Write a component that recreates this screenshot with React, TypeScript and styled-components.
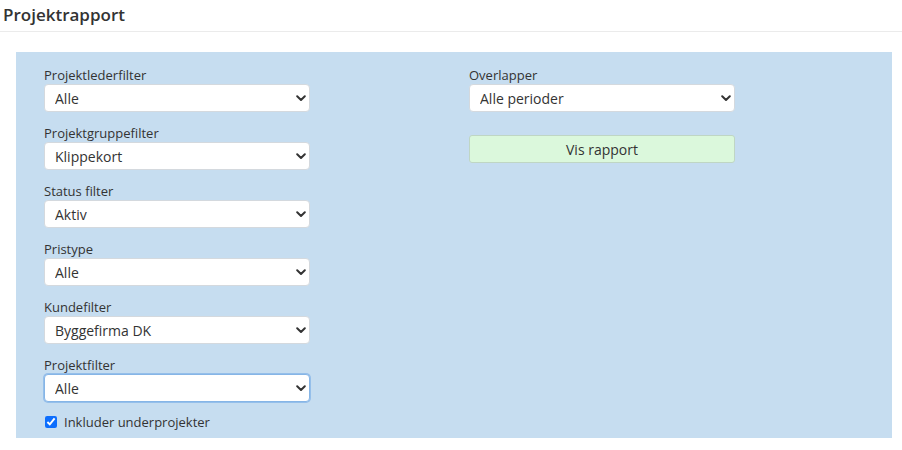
import React from "react";
import styled, { createGlobalStyle } from "styled-components";

const Global = createGlobalStyle`
  html, body { margin: 0; padding: 0; background: #fff; }
  body { font-family: "Open Sans", "Noto Sans", Arial, sans-serif; color: #333; }
`;

const Page = styled.div`
  width: 902px;
  height: 450px;
  overflow: hidden;
`;

const Header = styled.div`
  padding: 4px 0 0 3px;
  height: 27px;
  border-bottom: 1px solid #ebebeb;
`;

const Title = styled.h1`
  margin: 0;
  font-size: 17px;
  line-height: 22px;
  font-weight: 600;
  color: #333;
`;

const Panel = styled.div`
  margin: 20px 0 0 16px;
  width: 876px;
  height: 386px;
  box-sizing: border-box;
  background: #c6ddf0;
  padding: 14px 28px 0 28px;
  display: grid;
  grid-template-columns: 425px 1fr;
`;

const Column = styled.div`
  display: flex;
  flex-direction: column;
  gap: 12px;
`;

const Field = styled.div`
  display: flex;
  flex-direction: column;
`;

const Label = styled.label`
  font-size: 13px;
  line-height: 18px;
  color: #333;
`;

const SelectWrap = styled.div`
  position: relative;
  width: 266px;
  height: 28px;
`;

const Select = styled.select<{ $focused?: boolean }>`
  appearance: none;
  -webkit-appearance: none;
  width: 266px;
  height: 28px;
  box-sizing: border-box;
  margin: 0;
  padding: 0 28px 0 10px;
  font-family: "Open Sans", "Noto Sans", Arial, sans-serif;
  font-size: 14px;
  color: #333;
  background: #fff;
  border: 1px solid ${(p) => (p.$focused ? "#86b5e6" : "#d4d9de")};
  border-radius: 4px;
  box-shadow: ${(p) => (p.$focused ? "0 0 0 1px rgba(110,165,230,0.55)" : "none")};
  outline: none;
`;

const Chevron = styled.svg`
  position: absolute;
  right: 4px;
  top: 11px;
  width: 10px;
  height: 7px;
  pointer-events: none;
`;

const CheckRow = styled.label`
  display: flex;
  align-items: center;
  gap: 7px;
  font-size: 13px;
  line-height: 20px;
  color: #333;
  margin-top: -2px;
`;

const Check = styled.input`
  width: 12px;
  height: 12px;
  margin: 0 0 0 1px;
  accent-color: #0d6efd;
`;

const Button = styled.button`
  width: 266px;
  height: 28px;
  margin-top: 11px;
  box-sizing: border-box;
  background: #dbf8dc;
  border: 1px solid #bfd6c4;
  border-radius: 3px;
  font-family: "Open Sans", "Noto Sans", Arial, sans-serif;
  font-size: 14px;
  color: #333;
  padding: 0;
`;

function Dropdown({ label, value, focused }: { label: string; value: string; focused?: boolean }) {
  return (
    <Field>
      <Label>{label}</Label>
      <SelectWrap>
        <Select $focused={focused} defaultValue={value}>
          <option>{value}</option>
        </Select>
        <Chevron viewBox="0 0 10 7">
          <path d="M1.2 1.3 L5 5 L8.8 1.3" fill="none" stroke="#333" strokeWidth="2" strokeLinecap="round" strokeLinejoin="round" />
        </Chevron>
      </SelectWrap>
    </Field>
  );
}

export default function App() {
  return (
    <Page>
      <Global />
      <Header>
        <Title>Projektrapport</Title>
      </Header>
      <Panel>
        <Column>
          <Dropdown label="Projektlederfilter" value="Alle" />
          <Dropdown label="Projektgruppefilter" value="Klippekort" />
          <Dropdown label="Status filter" value="Aktiv" />
          <Dropdown label="Pristype" value="Alle" />
          <Dropdown label="Kundefilter" value="Byggefirma DK" />
          <Dropdown label="Projektfilter" value="Alle" focused />
          <CheckRow>
            <Check type="checkbox" defaultChecked />
            Inkluder underprojekter
          </CheckRow>
        </Column>
        <Column>
          <Dropdown label="Overlapper" value="Alle perioder" />
          <Button>Vis rapport</Button>
        </Column>
      </Panel>
    </Page>
  );
}
